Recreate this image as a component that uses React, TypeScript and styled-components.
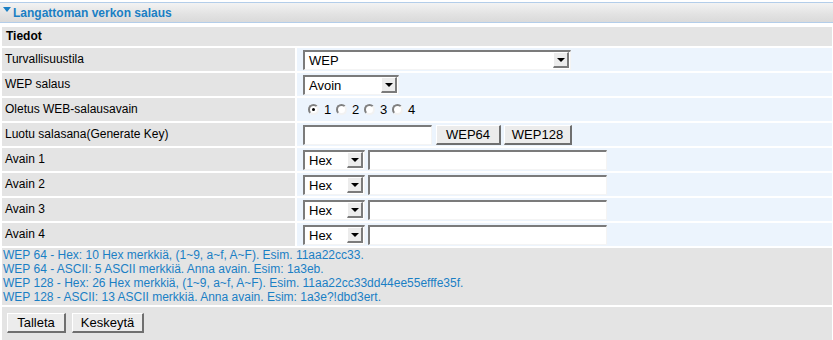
import React from 'react'
import styled, { createGlobalStyle } from 'styled-components'

const GlobalStyle = createGlobalStyle`
  body {
    margin: 0;
    background: #ffffff;
    font-family: 'Liberation Sans', Arial, sans-serif;
    font-size: 12px;
    color: #000;
  }
`

const Page = styled.div`
  width: 833px;
  padding-top: 2px;
  box-sizing: border-box;
`

const TitleBar = styled.div`
  display: flex;
  align-items: center;
  gap: 2px;
  height: 19px;
  padding-left: 3px;
  border-top: 1px solid #b3cde9;
  border-bottom: 1px solid #b3cde9;
  background: linear-gradient(#f3f3f3, #e2e2e2 60%, #dadada);
  color: #1a7fc4;
  font-weight: bold;
  font-size: 12px;
  margin-bottom: 4px;
`

const Caret = styled.span`
  width: 0;
  height: 0;
  border-left: 4px solid transparent;
  border-right: 4px solid transparent;
  border-top: 5px solid #1a7fc4;
  margin-bottom: 6px;
`

const Table = styled.div`
  display: grid;
  grid-template-columns: 293px 1fr;
  gap: 2px;
  padding: 0 1px 0 2px;
`

const Section = styled.div`
  grid-column: 1 / 3;
  height: 19px;
  box-sizing: border-box;
  display: flex;
  align-items: center;
  padding: 0 0 2px 4px;
  background: #e4e4e4;
  font-weight: bold;
  font-size: 12px;
`

const Label = styled.div`
  height: 23px;
  box-sizing: border-box;
  display: flex;
  align-items: center;
  padding: 0 0 2px 3px;
  background: #e4e4e4;
`

const Value = styled.div`
  height: 23px;
  display: flex;
  align-items: center;
  gap: 3px;
  padding-left: 6px;
  background: #ecf4fd;
`

const Help = styled.div`
  grid-column: 1 / 3;
  background: #e4e4e4;
  color: #1a7fc4;
  line-height: 14px;
  padding: 0 0 1px 1px;
`

const Actions = styled.div`
  grid-column: 1 / 3;
  height: 33px;
  box-sizing: border-box;
  display: flex;
  align-items: center;
  gap: 6px;
  padding: 0 0 2px 5px;
  background: #e4e4e4;
`

const SelectBox = styled.div<{ $w: number }>`
  width: ${p => p.$w}px;
  height: 20px;
  box-sizing: border-box;
  display: flex;
  align-items: center;
  justify-content: space-between;
  background: #fff;
  border-top: 2px solid #7b7b7b;
  border-left: 2px solid #7b7b7b;
  border-bottom: 1px solid #f4f4f4;
  border-right: 1px solid #f4f4f4;
  padding-left: 4px;
  font-size: 13px;
`

const Arrow = styled.span`
  width: 16px;
  height: 16px;
  box-sizing: border-box;
  display: flex;
  align-items: center;
  justify-content: center;
  background: #ececec;
  border-top: 1px solid #fff;
  border-left: 1px solid #fff;
  border-right: 2px solid #7b7b7b;
  border-bottom: 2px solid #7b7b7b;
  margin-right: 1px;
  &::after {
    content: '';
    border-left: 4px solid transparent;
    border-right: 4px solid transparent;
    border-top: 4px solid #000;
  }
`

const TextBox = styled.div<{ $w: number }>`
  width: ${p => p.$w}px;
  height: 20px;
  box-sizing: border-box;
  background: #fff;
  border-top: 2px solid #7b7b7b;
  border-left: 2px solid #7b7b7b;
  border-bottom: 1px solid #f4f4f4;
  border-right: 1px solid #f4f4f4;
`

const Button = styled.button<{ $w: number }>`
  width: ${p => p.$w}px;
  height: 20px;
  box-sizing: border-box;
  padding: 0;
  background: #ececec;
  border-top: 1px solid #fff;
  border-left: 1px solid #fff;
  border-right: 2px solid #6f6f6f;
  border-bottom: 2px solid #6f6f6f;
  font-family: 'Liberation Sans', Arial, sans-serif;
  font-size: 13px;
  color: #000;
`

const Radios = styled.div`
  display: flex;
  align-items: center;
  gap: 4px;
  padding-left: 5px;
  font-size: 13px;
`

const RadioItem = styled.label`
  display: flex;
  align-items: center;
  gap: 5px;
  width: 24px;
`

const Radio = styled.span<{ $on?: boolean }>`
  width: 11px;
  height: 11px;
  box-sizing: border-box;
  border-radius: 50%;
  border: 2px solid;
  border-color: #808080 #f2f2f2 #f2f2f2 #808080;
  background: #fff;
  display: flex;
  align-items: center;
  justify-content: center;
  &::after {
    content: '';
    width: 3px;
    height: 3px;
    border-radius: 50%;
    background: ${p => (p.$on ? '#000' : 'transparent')};
  }
`

const Select = ({ value, w }: { value: string; w: number }) => (
  <SelectBox $w={w}>
    <span>{value}</span>
    <Arrow />
  </SelectBox>
)

const keys = ['Avain 1', 'Avain 2', 'Avain 3', 'Avain 4']

const help = [
  'WEP 64 - Hex: 10 Hex merkkiä, (1~9, a~f, A~F). Esim. 11aa22cc33.',
  'WEP 64 - ASCII: 5 ASCII merkkiä. Anna avain. Esim: 1a3eb.',
  'WEP 128 - Hex: 26 Hex merkkiä, (1~9, a~f, A~F). Esim. 11aa22cc33dd44ee55efffe35f.',
  'WEP 128 - ASCII: 13 ASCII merkkiä. Anna avain. Esim: 1a3e?!dbd3ert.',
]

export default function App() {
  return (
    <Page>
      <GlobalStyle />
      <TitleBar>
        <Caret />
        Langattoman verkon salaus
      </TitleBar>
      <Table>
        <Section>Tiedot</Section>
        <Label>Turvallisuustila</Label>
        <Value>
          <Select value="WEP" w={268} />
        </Value>
        <Label>WEP salaus</Label>
        <Value>
          <Select value="Avoin" w={96} />
        </Value>
        <Label>Oletus WEB-salausavain</Label>
        <Value>
          <Radios>
            {[1, 2, 3, 4].map(n => (
              <RadioItem key={n}>
                <Radio $on={n === 1} />
                {n}
              </RadioItem>
            ))}
          </Radios>
        </Value>
        <Label>Luotu salasana(Generate Key)</Label>
        <Value>
          <TextBox $w={129} />
          <Button $w={65} style={{ marginLeft: 1 }}>WEP64</Button>
          <Button $w={68}>WEP128</Button>
        </Value>
        {keys.map(k => (
          <React.Fragment key={k}>
            <Label>{k}</Label>
            <Value>
              <Select value="Hex" w={62} />
              <TextBox $w={239} />
            </Value>
          </React.Fragment>
        ))}
        <Help>
          {help.map(h => (
            <div key={h}>{h}</div>
          ))}
        </Help>
        <Actions>
          <Button $w={59}>Talleta</Button>
          <Button $w={72}>Keskeytä</Button>
        </Actions>
      </Table>
    </Page>
  )
}
